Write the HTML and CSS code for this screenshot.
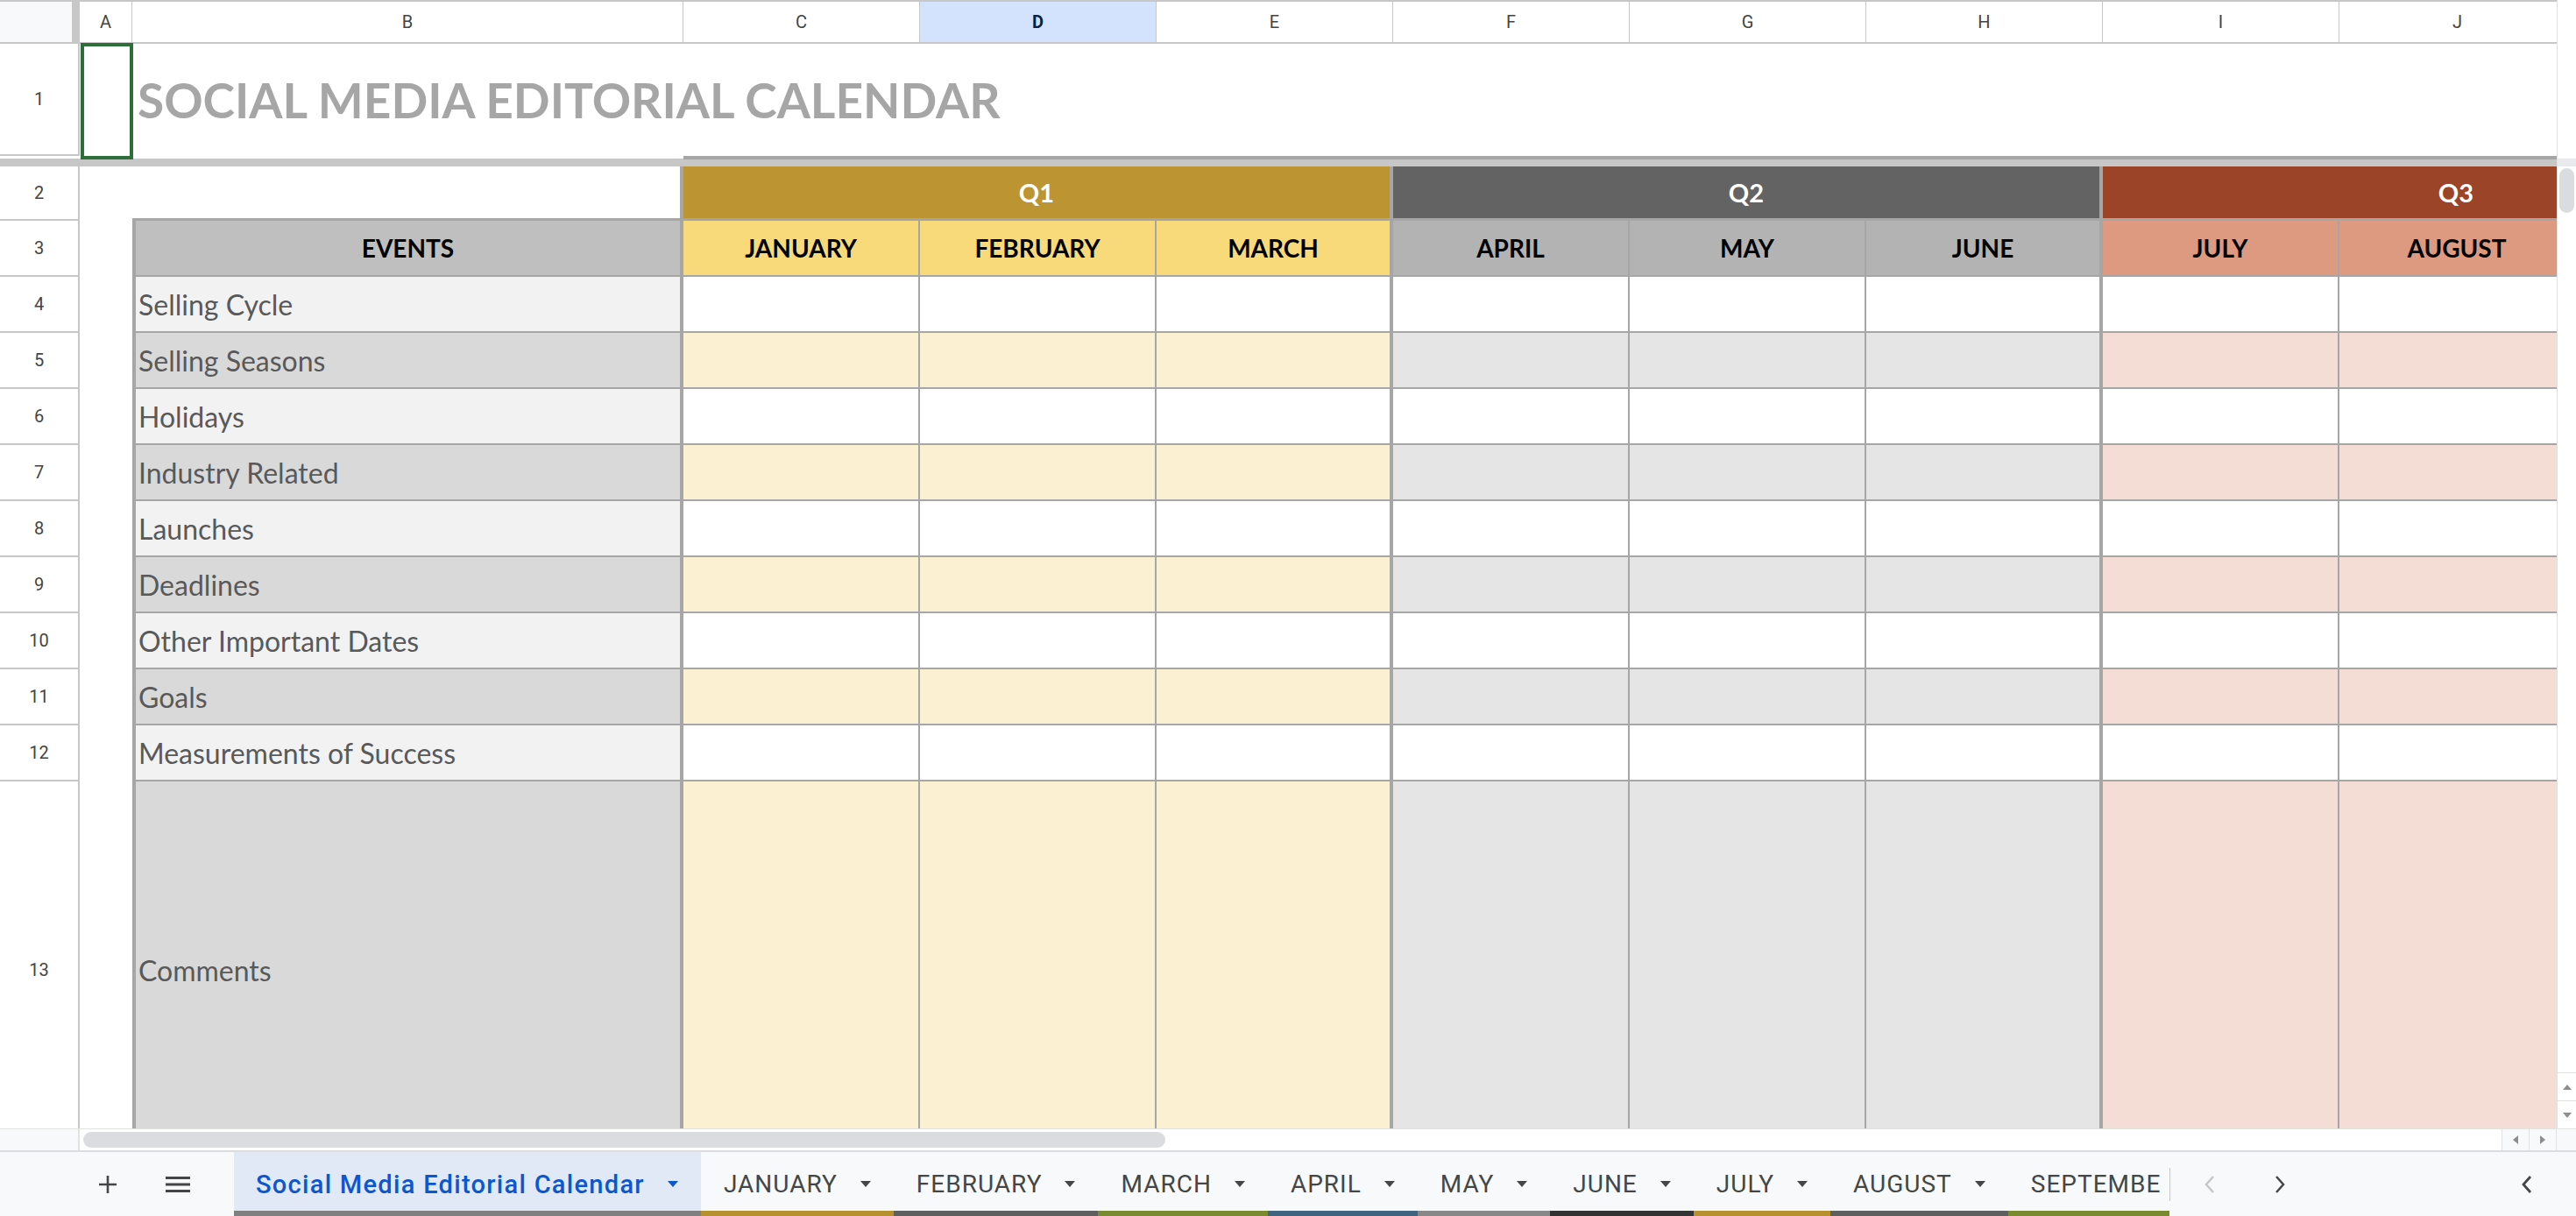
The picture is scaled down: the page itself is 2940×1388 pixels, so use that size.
FILE: index.html
```html
<!DOCTYPE html>
<html lang="en">
<head>
  <meta charset="UTF-8">
  <meta name="viewport" content="width=device-width, initial-scale=1.0">
  <title>Social Media Editorial Calendar</title>
  <link rel="stylesheet" href="styles.css">
</head>
<body>
  <div class="app">
    <!-- Sheet area + vertical scrollbar -->
    <div class="main">
      <div class="clip">
        <div class="grid" id="grid">
          <!-- Column headers (K lies under the scrollbar) -->
          <div class="corner"></div>
          <div class="colh">A</div>
          <div class="colh">B</div>
          <div class="colh">C</div>
          <div class="colh sel">D</div>
          <div class="colh">E</div>
          <div class="colh">F</div>
          <div class="colh">G</div>
          <div class="colh">H</div>
          <div class="colh">I</div>
          <div class="colh">J</div>
          <div class="colh"></div>

          <!-- Row 1 -->
          <div class="rowh">1</div>
          <div class="blank"></div>
          <div class="title">SOCIAL MEDIA EDITORIAL CALENDAR</div>

          <!-- Frozen rows divider -->
          <div class="freeze left"></div>
          <div class="freeze right"></div>

          <!-- Row 2 -->
          <div class="rowh">2</div>
          <div class="blank"></div>
          <div class="b2"></div>
          <div class="qb q1">Q1</div>
          <div class="qb q2">Q2</div>
          <div class="qb q3">Q3</div>

          <!-- Row 3 -->
          <div class="rowh">3</div>
          <div class="blank"></div>
          <div class="evh">EVENTS</div>
          <div class="mh q1">JANUARY</div>
          <div class="mh q1">FEBRUARY</div>
          <div class="mh q1 end">MARCH</div>
          <div class="mh q2">APRIL</div>
          <div class="mh q2">MAY</div>
          <div class="mh q2 end">JUNE</div>
          <div class="mh q3">JULY</div>
          <div class="mh q3">AUGUST</div>
          <div class="mh q3 end"></div>
        </div>
        <!-- Selected cell A1 -->
        <div class="selection"></div>
      </div>

      <div class="vscroll">
        <div class="vs-top"></div>
        <div class="vs-split"></div>
        <div class="vs-track"><div class="vs-thumb"></div></div>
        <div class="vs-btn"><svg width="10" height="6" viewBox="0 0 10 6"><polygon points="0,6 10,6 5,0" fill="#8e8e8e"/></svg></div>
        <div class="vs-btn"><svg width="10" height="6" viewBox="0 0 10 6"><polygon points="0,0 10,0 5,6" fill="#8e8e8e"/></svg></div>
      </div>
    </div>

    <!-- Horizontal scrollbar -->
    <div class="hscroll">
      <div class="hs-left"></div>
      <div class="hs-track"><div class="hs-thumb"></div></div>
      <div class="hs-btn"><svg width="6" height="10" viewBox="0 0 6 10"><polygon points="6,0 6,10 0,5" fill="#8e8e8e"/></svg></div>
      <div class="hs-btn"><svg width="6" height="10" viewBox="0 0 6 10"><polygon points="0,0 0,10 6,5" fill="#8e8e8e"/></svg></div>
      <div class="hs-corner"></div>
    </div>

    <!-- Sheet tabs -->
    <div class="tabbar">
      <div class="tools">
        <div class="tool"><svg width="22" height="22" viewBox="0 0 22 22"><path d="M11 1v20M1 11h20" stroke="#444746" stroke-width="2.6" fill="none"/></svg></div>
        <div class="tool"><svg width="28" height="18" viewBox="0 0 28 18"><rect x="0" y="0" width="28" height="3" fill="#444746"/><rect x="0" y="7.5" width="28" height="3" fill="#444746"/><rect x="0" y="15" width="28" height="3" fill="#444746"/></svg></div>
      </div>
      <div class="tab-list">
        <div class="tab active c-gray">Social Media Editorial Calendar<svg class="caret" width="12" height="7" viewBox="0 0 12 7"><polygon points="0,0 12,0 6,7"/></svg></div>
        <div class="tab c-gold">JANUARY<svg class="caret" width="12" height="7" viewBox="0 0 12 7"><polygon points="0,0 12,0 6,7"/></svg></div>
        <div class="tab c-dark">FEBRUARY<svg class="caret" width="12" height="7" viewBox="0 0 12 7"><polygon points="0,0 12,0 6,7"/></svg></div>
        <div class="tab c-olive">MARCH<svg class="caret" width="12" height="7" viewBox="0 0 12 7"><polygon points="0,0 12,0 6,7"/></svg></div>
        <div class="tab c-blue">APRIL<svg class="caret" width="12" height="7" viewBox="0 0 12 7"><polygon points="0,0 12,0 6,7"/></svg></div>
        <div class="tab c-mid">MAY<svg class="caret" width="12" height="7" viewBox="0 0 12 7"><polygon points="0,0 12,0 6,7"/></svg></div>
        <div class="tab c-black">JUNE<svg class="caret" width="12" height="7" viewBox="0 0 12 7"><polygon points="0,0 12,0 6,7"/></svg></div>
        <div class="tab c-gold">JULY<svg class="caret" width="12" height="7" viewBox="0 0 12 7"><polygon points="0,0 12,0 6,7"/></svg></div>
        <div class="tab c-dark">AUGUST<svg class="caret" width="12" height="7" viewBox="0 0 12 7"><polygon points="0,0 12,0 6,7"/></svg></div>
        <div class="tab c-olive last">SEPTEMBE</div>
      </div>
      <div class="tab-sep"></div>
      <div class="tab-nav">
        <div class="tool"><svg width="14" height="22" viewBox="0 0 14 22"><polyline points="11,2 3,11 11,20" fill="none" stroke="#c4c7c5" stroke-width="2.5"/></svg></div>
        <div class="tool"><svg width="14" height="22" viewBox="0 0 14 22"><polyline points="3,2 11,11 3,20" fill="none" stroke="#444746" stroke-width="2.5"/></svg></div>
      </div>
      <div class="spacer"></div>
      <div class="tool side"><svg width="14" height="22" viewBox="0 0 14 22"><polyline points="11,2 3,11 11,20" fill="none" stroke="#444746" stroke-width="2.8"/></svg></div>
    </div>
  </div>

  <script>
    // Event rows 4 - 13
    const grid = document.getElementById('grid');
    const events = [
      'Selling Cycle',
      'Selling Seasons',
      'Holidays',
      'Industry Related',
      'Launches',
      'Deadlines',
      'Other Important Dates',
      'Goals',
      'Measurements of Success',
      'Comments'
    ];
    const quarters = ['q1', 'q1', 'q1', 'q2', 'q2', 'q2', 'q3', 'q3', 'q3'];

    events.forEach((name, i) => {
      const alt = i % 2 === 1 ? ' alt' : '';
      let html = `<div class="rowh">${i + 4}</div><div class="blank"></div><div class="ev${alt}">${name}</div>`;
      quarters.forEach((q, j) => {
        const end = j % 3 === 2 ? ' end' : '';
        html += `<div class="dc ${q}${alt}${end}"></div>`;
      });
      grid.insertAdjacentHTML('beforeend', html);
    });
  </script>
</body>
</html>
```

FILE: styles.css
```css
* {
  box-sizing: border-box;
}

body {
  margin: 0;
  width: 2940px;
  height: 1388px;
  overflow: hidden;
  background: #fff;
  font-family: Roboto, 'Liberation Sans', sans-serif;
}

.app {
  display: flex;
  flex-direction: column;
  height: 1388px;
}

/* Sheet area */
.main {
  display: flex;
  height: 1288px;
}

.clip {
  position: relative;
  width: 2918px;
  height: 1288px;
  overflow: hidden;
}

.grid {
  display: grid;
  grid-template-columns: 91px 60px 629px repeat(9, 270px);
  grid-template-rows: 50px 128px 12px 62px 64px repeat(9, 64px) 432px;
  width: 3210px;
}

/* Headers */
.corner {
  background: #f8f9fa;
  border-top: 2px solid #c7c7c7;
  border-bottom: 2px solid #c7c7c7;
  border-right: 9px solid #c7c7c7;
}

.colh {
  display: flex;
  align-items: center;
  justify-content: center;
  border-top: 2px solid #c7c7c7;
  border-bottom: 2px solid #c7c7c7;
  border-right: 1px solid #c7c7c7;
  font-size: 20px;
  color: #444;
}

.colh.sel {
  background: #d3e3fd;
  color: #0b1f47;
  font-weight: 700;
}

.rowh {
  display: flex;
  align-items: center;
  justify-content: center;
  border-right: 2px solid #c7c7c7;
  border-bottom: 2px solid #c7c7c7;
  font-size: 20px;
  color: #444;
}

.title {
  grid-column: 3 / -1;
  display: flex;
  align-items: center;
  padding-left: 6px;
  font-family: Lato, sans-serif;
  font-weight: 700;
  font-size: 55px;
  color: #a6a6a6;
  white-space: nowrap;
}

.freeze {
  background: #c7c7c7;
}

.freeze.left {
  grid-column: 1 / 4;
  border-top: 3px solid #fff;
}

.freeze.right {
  grid-column: 4 / -1;
  border-top: 4px solid #a6a6a6;
}

.selection {
  position: absolute;
  left: 92px;
  top: 49px;
  width: 60px;
  height: 133px;
  border: 4px solid #2e6e3a;
}

/* Calendar table */
.b2 {
  border-right: 4px solid #a6a6a6;
  border-bottom: 3px solid #a6a6a6;
}

.qb {
  grid-column: span 3;
  display: flex;
  align-items: center;
  justify-content: center;
  border-right: 4px solid #a6a6a6;
  border-bottom: 3px solid #a6a6a6;
  font-family: Lato, sans-serif;
  font-weight: 700;
  font-size: 29px;
  color: #fff;
}

.qb.q1 { background: #bc9432; }
.qb.q2 { background: #636363; }
.qb.q3 { background: #9c4427; }

.evh,
.mh {
  display: flex;
  align-items: center;
  justify-content: center;
  font-family: Lato, sans-serif;
  font-weight: 700;
  font-size: 28px;
  color: #000;
  border-bottom: 2px solid #a6a6a6;
}

.evh {
  background: #bfbfbf;
  border-left: 4px solid #a6a6a6;
  border-right: 4px solid #a6a6a6;
}

.mh {
  border-right: 2px solid #a6a6a6;
}

.mh.q1 { background: #f9da7b; }
.mh.q2 { background: #b3b3b3; }
.mh.q3 { background: #de9a81; }

.ev {
  display: flex;
  align-items: center;
  padding-left: 3px;
  background: #f2f2f2;
  border-left: 4px solid #a6a6a6;
  border-right: 4px solid #a6a6a6;
  border-bottom: 2px solid #a6a6a6;
  font-family: Lato, sans-serif;
  font-size: 32px;
  color: #595959;
  white-space: nowrap;
}

.ev.alt {
  background: #d9d9d9;
}

.dc {
  background: #fff;
  border-right: 2px solid #a6a6a6;
  border-bottom: 2px solid #a6a6a6;
}

.dc.q1.alt { background: #fcf0d2; }
.dc.q2.alt { background: #e5e5e5; }
.dc.q3.alt { background: #f3ddd4; }

.mh.end,
.dc.end {
  border-right: 4px solid #a6a6a6;
}

/* Vertical scrollbar */
.vscroll {
  display: flex;
  flex-direction: column;
  width: 22px;
  border-left: 1px solid #e1e3e1;
}

.vs-top {
  height: 181px;
}

.vs-split {
  height: 9px;
  background: #e8eaed;
}

.vs-track {
  flex: 1;
  padding: 2px 2px 0 2px;
}

.vs-thumb {
  width: 17px;
  height: 51px;
  border-radius: 9px;
  background: #dadce0;
}

.vs-btn {
  display: flex;
  align-items: center;
  justify-content: center;
  height: 32px;
  border-top: 1px solid #e1e3e1;
}

/* Horizontal scrollbar */
.hscroll {
  display: flex;
  height: 25px;
  border-top: 1px solid #e1e3e1;
}

.hs-left {
  width: 91px;
  background: #f8f9fa;
  border-right: 2px solid #e1e3e1;
}

.hs-track {
  flex: 1;
  padding: 3px 4px;
}

.hs-thumb {
  width: 1235px;
  height: 18px;
  border-radius: 9px;
  background: #dadce0;
}

.hs-btn {
  display: flex;
  align-items: center;
  justify-content: center;
  width: 31px;
  background: #f8f9fa;
  border-left: 1px solid #e1e3e1;
}

.hs-corner {
  width: 23px;
  background: #f8f9fa;
  border-left: 1px solid #e1e3e1;
}

/* Tab bar */
.tabbar {
  display: flex;
  height: 75px;
  background: #f8f9fa;
  border-top: 2px solid #dadce0;
}

.tools {
  display: flex;
  align-items: center;
  gap: 40px;
  padding-left: 103px;
  padding-right: 44px;
}

.tool {
  display: flex;
  align-items: center;
  justify-content: center;
  width: 40px;
  height: 40px;
}

.tab-list {
  display: flex;
  width: 2209px;
  overflow: hidden;
}

.tab {
  display: flex;
  align-items: center;
  gap: 26px;
  padding: 6px 26px 0 26px;
  border-bottom: 6px solid #808080;
  font-size: 28px;
  letter-spacing: 1px;
  color: #444746;
  white-space: nowrap;
}

.tab.last {
  flex: 1;
  padding-right: 0;
}

.tab .caret {
  fill: #444746;
  flex-shrink: 0;
}

.tab.active {
  padding-left: 25px;
  background: #e1e8f6;
  color: #0b57d0;
  font-size: 29px;
  font-weight: 500;
  letter-spacing: 1.3px;
}

.tab.active .caret {
  fill: #0b57d0;
}

.c-gray { border-bottom-color: #808080; }
.c-gold { border-bottom-color: #b8912f; }
.c-dark { border-bottom-color: #5f5f5f; }
.c-olive { border-bottom-color: #7a8a30; }
.c-blue { border-bottom-color: #3e6480; }
.c-mid { border-bottom-color: #888888; }
.c-black { border-bottom-color: #333333; }

.tab-sep {
  width: 1px;
  height: 38px;
  align-self: center;
  background: #c4c7c5;
}

.tab-nav {
  display: flex;
  align-items: center;
  gap: 40px;
  padding-left: 25px;
}

.spacer {
  flex: 1;
}

.tool.side {
  align-self: center;
  margin-right: 36px;
}
```
